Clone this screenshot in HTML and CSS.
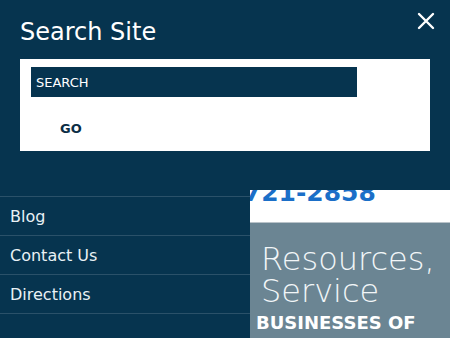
FILE: index.html
```html
<!DOCTYPE html>
<html lang="en">
<head>
    <meta charset="UTF-8">
    <meta name="viewport" content="width=device-width, initial-scale=1.0">
    <title>Search Site</title>
    <link rel="stylesheet" href="styles.css">
</head>
<body>
<div class="search-panel">
    <div class="search-head">
        <h1>Search Site</h1>
        <button class="close" aria-label="Close">
            <svg width="18" height="18" viewBox="0 0 18 18"><path d="M2 2 L16 16 M16 2 L2 16" stroke="#fff" stroke-width="2.4" stroke-linecap="round"/></svg>
        </button>
    </div>
    <form class="search-box">
        <input type="text" class="search-input" placeholder="SEARCH">
        <button type="submit" class="go">GO</button>
    </form>
</div>
<div class="page">
    <ul class="side-nav">
        <li><a href="#">Blog</a></li>
        <li><a href="#">Contact Us</a></li>
        <li><a href="#">Directions</a></li>
    </ul>
    <div class="content">
        <div class="phone-strip"><span class="phone">(508) 721-2858</span></div>
        <div class="hero">
            <h2>Resources, Service</h2>
            <p>BUSINESSES OF</p>
        </div>
    </div>
</div>
</body>
</html>
```

FILE: styles.css
```css
body {
    margin: 0;
    background-color: #06344f;
    font-family: "DejaVu Sans", sans-serif;
    color: #fff;
    overflow: hidden;
}
.search-panel {
    height: 190px;
    box-sizing: border-box;
    padding: 18px 15px 0 20px;
}
.search-head {
    display: flex;
    justify-content: space-between;
    align-items: flex-start;
}
.search-head h1 {
    margin: 0;
    font-size: 24px;
    font-weight: normal;
    line-height: 28px;
}
.close {
    background: none;
    border: none;
    padding: 0;
    margin-top: -6px;
    width: 18px;
    height: 18px;
    cursor: pointer;
}
.close svg {
    display: block;
}
.search-box {
    margin: 13px 5px 0 0;
    background-color: #fff;
    padding: 8px 11px 12px;
    display: flex;
    flex-direction: column;
    align-items: flex-start;
}
.search-input {
    width: 326px;
    height: 30px;
    box-sizing: border-box;
    border: none;
    margin: 0;
    padding: 0 5px;
    background-color: #06344f;
    color: #fff;
    font-family: "DejaVu Sans", sans-serif;
    font-size: 13px;
}
.search-input::placeholder {
    color: #fff;
    opacity: 1;
}
.go {
    margin-top: 20px;
    background: none;
    border: none;
    padding: 0 0 0 29px;
    height: 22px;
    font-family: "DejaVu Sans", sans-serif;
    font-size: 13px;
    font-weight: bold;
    color: #0b2e45;
    cursor: pointer;
}
.page {
    display: flex;
}
.side-nav {
    list-style: none;
    margin: 0;
    padding: 6px 0 0;
    width: 250px;
    flex-shrink: 0;
}
.side-nav li {
    border-top: 1px solid #2a5169;
    height: 38px;
    display: flex;
    align-items: center;
    padding-left: 10px;
}
.side-nav li:last-child {
    border-bottom: 1px solid #2a5169;
}
.side-nav a {
    color: #e9f1f5;
    text-decoration: none;
    font-size: 16px;
}
.content {
    flex: 1;
    overflow: hidden;
}
.phone-strip {
    height: 32px;
    background-color: #fff;
    border-bottom: 1px solid #b9c3c9;
    overflow: hidden;
    white-space: nowrap;
}
.phone {
    display: block;
    margin: -10px 0 0 -90px;
    font-size: 25px;
    line-height: 25px;
    font-weight: bold;
    color: #1b6fc8;
}
.hero {
    background-color: #6b8593;
    height: 200px;
    padding: 20px 6px 0;
}
.hero h2 {
    margin: 0 0 0 5px;
    width: 180px;
    font-size: 32px;
    line-height: 32px;
    font-weight: 200;
    color: #f2f6f8;
}
.hero p {
    margin: 6px 0 0;
    font-size: 18px;
    line-height: 20px;
    font-weight: bold;
    color: #fff;
}
```
